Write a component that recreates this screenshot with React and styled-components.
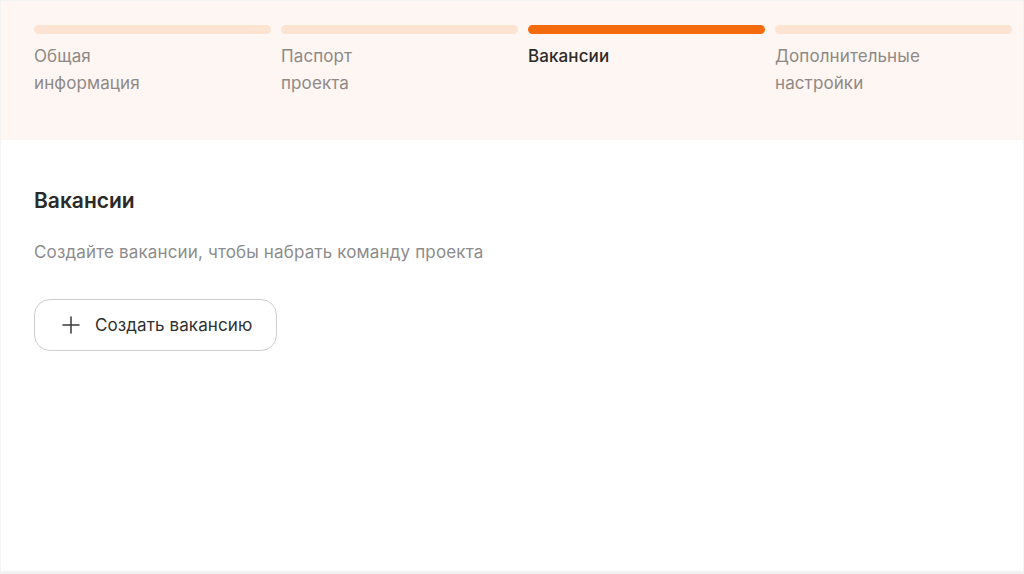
import React from 'react'
import styled, { createGlobalStyle } from 'styled-components'

const GlobalStyle = createGlobalStyle`
  html, body {
    margin: 0;
    padding: 0;
    background: #ffffff;
    font-family: Inter, "Noto Sans", "Liberation Sans", sans-serif;
  }
`

const Page = styled.div`
  width: 1024px;
  height: 574px;
  box-sizing: border-box;
  border: 1px solid #f3f3f3;
  border-bottom-width: 3px;
  display: flex;
  flex-direction: column;
  background: #ffffff;
  overflow: hidden;
`

const StepsBar = styled.div`
  background: #fdf6f2;
  height: 139px;
  box-sizing: border-box;
  padding: 24px 11px 0 33px;
  display: grid;
  grid-template-columns: repeat(4, 1fr);
  column-gap: 10px;
  align-items: start;
`

const Step = styled.div`
  display: flex;
  flex-direction: column;
  gap: 9px;
`

const Track = styled.div`
  height: 9px;
  border-radius: 5px;
  background: ${props => (props.active ? '#f46b0d' : '#fde3d2')};
`

const StepLabel = styled.div`
  font-size: 17px;
  line-height: 27px;
  letter-spacing: 0.1px;
  color: ${props => (props.active ? '#2d2b2a' : '#8f8986')};
  font-weight: ${props => (props.active ? 500 : 400)};
`

const Content = styled.div`
  padding: 47px 33px 0;
  display: flex;
  flex-direction: column;
  align-items: flex-start;
`

const Title = styled.h2`
  margin: 0;
  font-size: 21px;
  line-height: 28px;
  font-weight: 600;
  color: #2a2a2a;
`

const Subtitle = styled.p`
  margin: 25px 0 0;
  font-size: 17px;
  line-height: 24px;
  letter-spacing: 0.15px;
  color: #8c8c8c;
`

const CreateButton = styled.button`
  margin-top: 35px;
  width: 243px;
  height: 52px;
  box-sizing: border-box;
  border: 1.5px solid #cfcfcf;
  border-radius: 16px;
  background: #ffffff;
  display: flex;
  align-items: center;
  gap: 15px;
  padding: 0 0 0 27px;
  font-family: inherit;
  font-size: 17px;
  letter-spacing: 0.1px;
  color: #2f2f2f;
  cursor: pointer;
`

const PlusIcon = () => (
  <svg width="18" height="18" viewBox="0 0 18 18" fill="none">
    <path d="M9 1v16M1 9h16" stroke="#3a3a3a" strokeWidth="1.5" strokeLinecap="round" />
  </svg>
)

const steps = [
  { label: ['Общая', 'информация'] },
  { label: ['Паспорт', 'проекта'] },
  { label: ['Вакансии'], active: true },
  { label: ['Дополнительные', 'настройки'] },
]

export default function App() {
  return (
    <>
      <GlobalStyle />
      <Page>
        <StepsBar>
          {steps.map((s, i) => (
            <Step key={i}>
              <Track active={s.active} />
              <StepLabel active={s.active}>
                {s.label.map((l, j) => (
                  <div key={j}>{l}</div>
                ))}
              </StepLabel>
            </Step>
          ))}
        </StepsBar>
        <Content>
          <Title>Вакансии</Title>
          <Subtitle>Создайте вакансии, чтобы набрать команду проекта</Subtitle>
          <CreateButton>
            <PlusIcon />
            Создать вакансию
          </CreateButton>
        </Content>
      </Page>
    </>
  )
}
